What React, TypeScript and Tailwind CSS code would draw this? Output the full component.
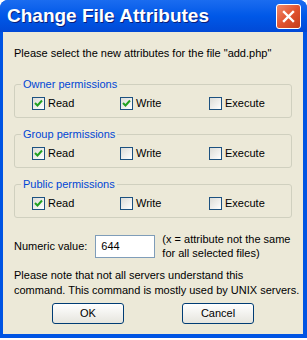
import React from "react";

type Perm = { read: boolean; write: boolean; execute: boolean };

const initial: { title: string; perm: Perm }[] = [
  { title: "Owner permissions", perm: { read: true, write: true, execute: false } },
  { title: "Group permissions", perm: { read: true, write: false, execute: false } },
  { title: "Public permissions", perm: { read: true, write: false, execute: false } },
];

function XpCheckbox({ label, checked, onChange }: { label: string; checked: boolean; onChange: () => void }) {
  return (
    <label className="flex items-center gap-[3px] h-[13px] cursor-default" onClick={onChange}>
      <span className="w-[13px] h-[13px] border border-[#1c5180] bg-gradient-to-br from-[#dcdcd7] to-white flex items-center justify-center shrink-0">
        {checked && (
          <svg width="9" height="9" viewBox="0 0 9 9">
            <path d="M1 4 L3.5 6.5 L8 1.5" stroke="#21a121" strokeWidth="2" fill="none" />
          </svg>
        )}
      </span>
      <span className="leading-[13px]">{label}</span>
    </label>
  );
}

function PermGroup({ title, value, onChange }: { title: string; value: Perm; onChange: (p: Perm) => void }) {
  return (
    <fieldset className="border border-[#d0d0bf] rounded-[3px] pb-[7px]">
      <legend className="ml-[6px] px-[2px] text-[#0046d5] leading-[13px]">{title}</legend>
      <div className="grid grid-cols-[88px_89px_1fr] pl-[17px] pt-[6px]">
        <XpCheckbox label="Read" checked={value.read} onChange={() => onChange({ ...value, read: !value.read })} />
        <XpCheckbox label="Write" checked={value.write} onChange={() => onChange({ ...value, write: !value.write })} />
        <XpCheckbox label="Execute" checked={value.execute} onChange={() => onChange({ ...value, execute: !value.execute })} />
      </div>
    </fieldset>
  );
}

function XpButton({ children }: { children: React.ReactNode }) {
  return (
    <button className="w-[72px] h-[21px] rounded-[3px] border border-[#003c74] bg-gradient-to-b from-white to-[#e6e5de] leading-[13px] text-black">
      {children}
    </button>
  );
}

export default function App() {
  const [groups, setGroups] = React.useState(initial);

  return (
    <div className="w-[307px] h-[340px] bg-white font-['Liberation_Sans',sans-serif] text-[11px] text-black">
      <div className="h-[338px] flex flex-col rounded-t-[8px] overflow-hidden bg-[#0054e3]">
        {/* title bar */}
        <div className="h-[32px] shrink-0 flex items-center justify-between pl-[7px] pr-[6px] bg-gradient-to-b from-[#1a6cf0] via-[#0058e8] to-[#0149d6]">
          <span className="text-white font-bold text-[19px] [text-shadow:1px_1px_0_#0a1e7a]">
            Change File Attributes
          </span>
          <span className="w-[25px] h-[25px] rounded-[3px] border border-white bg-gradient-to-br from-[#f0896a] via-[#e2532f] to-[#c33c1a] flex items-center justify-center">
            <svg width="13" height="13" viewBox="0 0 13 13">
              <path d="M2 2 L11 11 M11 2 L2 11" stroke="white" strokeWidth="2.4" strokeLinecap="square" />
            </svg>
          </span>
        </div>

        {/* body */}
        <div className="flex-1 ml-[3px] mr-[4px] mb-[4px] bg-[#ece9d8] pl-[11px] pr-[11px] pt-[14px] flex flex-col whitespace-nowrap">
          <p className="leading-[14px]">Please select the new attributes for the file "add.php"</p>

          <div className="mt-[18px] flex flex-col gap-[10px]">
            {groups.map((g, i) => (
              <PermGroup
                key={g.title}
                title={g.title}
                value={g.perm}
                onChange={(p) => setGroups((prev) => prev.map((x, j) => (j === i ? { ...x, perm: p } : x)))}
              />
            ))}
          </div>

          <div className="mt-[14px] flex items-center gap-[8px]">
            <span>Numeric value:</span>
            <input
              className="w-[60px] h-[23px] border border-[#7f9db9] bg-white px-[5px] outline-none"
              defaultValue="644"
            />
            <span className="leading-[14px] ml-[-1px]">
              (x = attribute not the same
              <br />
              for all selected files)
            </span>
          </div>

          <p className="mt-[8px] leading-[15px]">
            Please note that not all servers understand this
            <br />
            command. This command is mostly used by UNIX servers.
          </p>

          <div className="mt-[5px] flex pl-[38px] gap-[58px]">
            <XpButton>OK</XpButton>
            <XpButton>Cancel</XpButton>
          </div>
        </div>
      </div>
    </div>
  );
}
